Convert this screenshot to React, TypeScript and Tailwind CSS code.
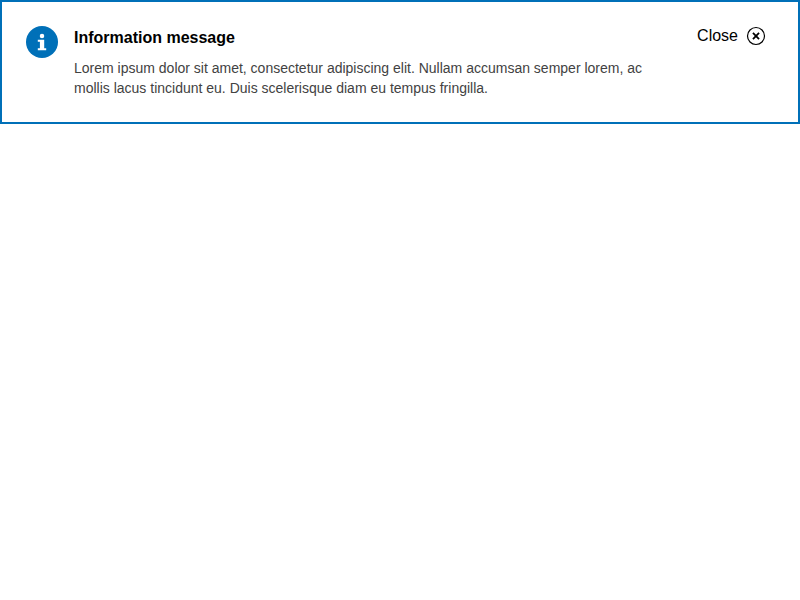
function InfoIcon() {
  return (
    <svg className="size-8 shrink-0" viewBox="0 0 32 32" aria-hidden="true">
      <circle cx="16" cy="16" r="16" fill="#0070b8" />
      <circle cx="16" cy="10" r="2.25" fill="#fff" />
      <path d="M11.8 13.8h6.4v8.4h2v2h-8.4v-2h2.1v-6.4h-2.1z" fill="#fff" />
    </svg>
  );
}

function CloseIcon() {
  return (
    <svg className="size-5 shrink-0" viewBox="0 0 20 20" fill="none" stroke="#000" aria-hidden="true">
      <circle cx="10" cy="10" r="8.5" strokeWidth="1.2" />
      <path d="M6.95 6.95l6.1 6.1M13.05 6.95l-6.1 6.1" strokeWidth="1.8" />
    </svg>
  );
}

export default function App() {
  return (
    <div className="flex h-[124px] items-start border-2 border-[#0070b8] bg-white p-6 font-['Liberation_Sans',Arial,sans-serif]">
      <InfoIcon />
      <div className="ml-4 w-[590px]">
        <h2 className="text-base leading-6 font-bold text-black">Information message</h2>
        <p className="mt-2 text-sm leading-5 text-[#424242]">
          Lorem ipsum dolor sit amet, consectetur adipiscing elit. Nullam accumsan semper lorem, ac mollis lacus tincidunt eu. Duis scelerisque diam eu tempus fringilla.
        </p>
      </div>
      <button type="button" className="mr-2 ml-auto flex h-5 items-center gap-2 text-base text-black">
        Close
        <CloseIcon />
      </button>
    </div>
  );
}
